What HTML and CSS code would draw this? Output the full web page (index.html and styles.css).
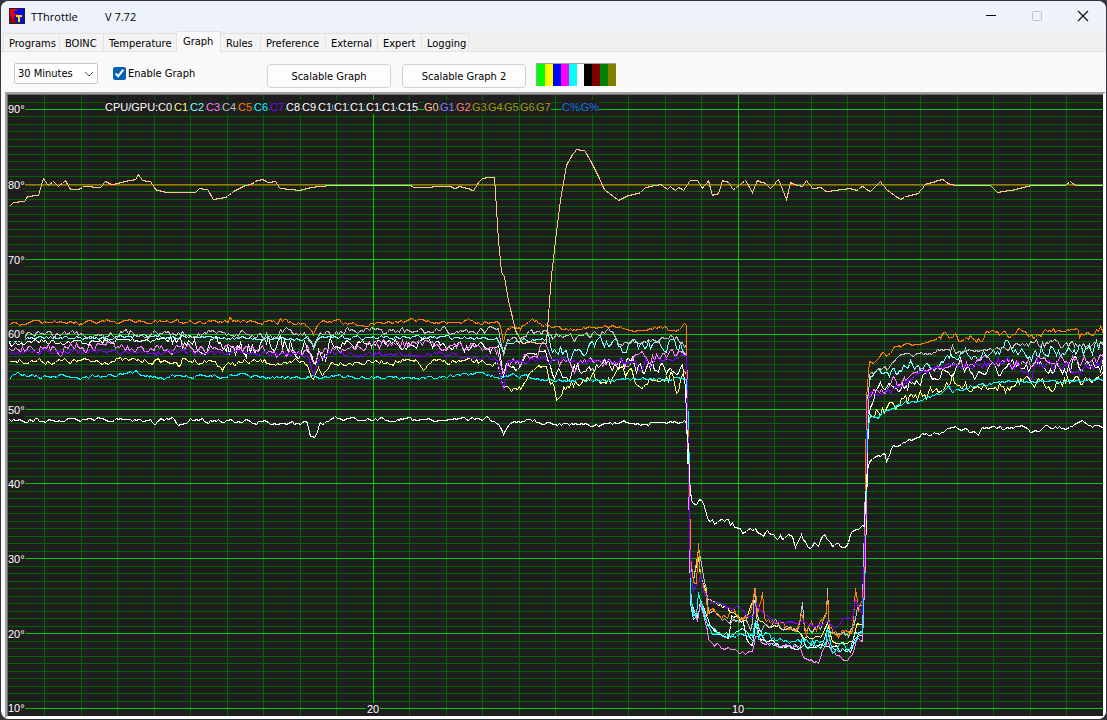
FILE: index.html
```html
<!DOCTYPE html>
<html lang="en">
<head>
    <meta charset="UTF-8">
    <meta name="viewport" content="width=device-width, initial-scale=1.0">
    <title>TThrottle</title>
    <link rel="stylesheet" href="styles.css">
</head>
<body>
    <div class="window">
        <header class="titlebar">
            <svg class="app-icon" viewBox="0 0 16 16" shape-rendering="crispEdges" aria-hidden="true">
                <rect width="16" height="16" fill="#202038"/>
                <rect x="1" y="1" width="14" height="14" fill="#0808f0"/>
                <path d="M1 1h7v2H5v3h4v2H5v7H1z" fill="#e80010"/>
                <path d="M1 8h2v7H1zM3 11h4v4H3z" fill="#900010"/>
                <path d="M6 7h8v3h-1V9h-2v6H9V9H8v1H6z" fill="#303000"/>
                <path d="M7 7h6v2h-2v5H9V9H7z" fill="#f0e010"/>
            </svg>
            <h1>TThrottle</h1>
            <span class="version">V 7.72</span>
            <div class="window-buttons">
                <button type="button" aria-label="Minimize"><svg viewBox="0 0 12 12"><path d="M1 5.5h10" stroke="#000"/></svg></button>
                <button type="button" aria-label="Maximize" disabled><svg viewBox="0 0 12 12"><rect x="1.5" y="1.5" width="9" height="9" rx="1" stroke="#bfc3c8"/></svg></button>
                <button type="button" aria-label="Close"><svg viewBox="0 0 12 12"><path d="M1 1l10 10M11 1L1 11" stroke="#111" stroke-width="1.2"/></svg></button>
            </div>
        </header>

        <div class="tabs" role="tablist">
            <button type="button" role="tab">Programs</button>
            <button type="button" role="tab">BOINC</button>
            <button type="button" role="tab">Temperature</button>
            <button type="button" role="tab" class="active" aria-selected="true">Graph</button>
            <button type="button" role="tab">Rules</button>
            <button type="button" role="tab">Preference</button>
            <button type="button" role="tab">External</button>
            <button type="button" role="tab">Expert</button>
            <button type="button" role="tab">Logging</button>
        </div>

        <main class="panel">
            <div class="toolbar">
                <div class="range">
                    <select id="range" aria-label="Time range">
                        <option>30 Minutes</option>
                        <option>60 Minutes</option>
                    </select>
                    <svg class="chevron" viewBox="0 0 10 6"><path d="M1 1l4 4 4-4"/></svg>
                </div>
                <div class="enable">
                    <input type="checkbox" id="enableGraph" checked>
                    <label for="enableGraph">Enable Graph</label>
                </div>
                <div class="actions">
                    <button type="button">Scalable Graph</button>
                    <button type="button">Scalable Graph 2</button>
                </div>
                <div class="swatches">
                    <i class="lime"></i><i class="yellow"></i><i class="blue"></i><i class="magenta"></i><i class="cyan"></i><i class="white"></i><i class="black"></i><i class="maroon"></i><i class="green"></i><i class="olive"></i>
                </div>
            </div>

            <div class="frame">
                <div class="plot" id="plot">
                    <svg id="chart" class="chart" viewBox="8 95 1095 621" preserveAspectRatio="none" role="img" aria-label="CPU and GPU temperatures"></svg>
                    <div class="legend">
                        <span class="legend-title">CPU/GPU:</span>
                        <div class="keys">
                            <span class="c0">C0</span><span class="c1">C1</span><span class="c2">C2</span><span class="c3">C3</span><span class="c4">C4</span><span class="c5">C5</span><span class="c6">C6</span><span class="c7">C7</span><span class="c0">C8</span><span class="c0">C9</span><span class="c0">C10</span><span class="c0">C11</span><span class="c0">C12</span><span class="c0">C13</span><span class="c0">C14</span><span class="c0 wide">C15</span>
                        </div>
                        <div class="keys gpu">
                            <span class="g0">G0</span><span class="g1">G1</span><span class="g2">G2</span><span class="g3">G3</span><span class="g3">G4</span><span class="g3">G5</span><span class="g3">G6</span><span class="g3">G7</span>
                        </div>
                        <div class="load">
                            <span>C%</span><span>G%</span>
                        </div>
                    </div>
                </div>
            </div>
        </main>
    </div>
    <script src="graph.js"></script>
</body>
</html>
```

FILE: styles.css
```css
* { box-sizing: border-box; }
body {
    margin: 0;
    background: #35353d;
    color: #000;
    font-family: "DejaVu Sans Condensed", "DejaVu Sans", sans-serif;
    font-size: 11px;
}
button, select, input { font: inherit; color: inherit; margin: 0; }
.window {
    display: flex;
    flex-direction: column;
    height: calc(100vh - 2px);
    margin: 1px;
    border-radius: 8px;
    overflow: hidden;
    background: #f9f9f9;
}

/* title bar */
.titlebar {
    display: flex;
    align-items: center;
    height: 30px;
    padding-left: 8px;
    background: linear-gradient(90deg, #eef3fb, #edf3f8);
    font-family: "Open Sans", sans-serif;
}
.titlebar h1 {
    width: 74px;
    margin: 0 0 0 6px;
    font-size: 11px;
    font-weight: normal;
}
.app-icon { width: 16px; height: 16px; }
.window-buttons { display: flex; margin-left: auto; }
.window-buttons button {
    display: flex;
    align-items: center;
    justify-content: center;
    width: 46px;
    height: 28px;
    padding: 0;
    border: 0;
    background: none;
}
.window-buttons svg { width: 12px; height: 12px; fill: none; }

/* tabs */
.tabs {
    display: grid;
    grid-template-columns: 57px 44px 73px 44px 40px 65px 52px 44px 47px;
    align-items: end;
    height: 21px;
    padding-left: 2px;
    background: #f0f0f0;
    box-shadow: inset 0 -1px #e2e2e2;
}
.tabs button {
    height: 19px;
    padding: 1px 0 0 5px;
    border: 1px solid #e2e2e2;
    border-left-width: 0;
    background: #f3f3f3;
    text-align: left;
    white-space: nowrap;
}
.tabs button:first-child { border-left-width: 1px; }
.tabs .active {
    height: 21px;
    padding: 0 0 1px 6px;
    border-bottom: 0;
    background: #f9f9f9;
}

/* controls */
.panel { flex: 1; display: flex; flex-direction: column; min-height: 0; }
.toolbar {
    display: flex;
    align-items: flex-start;
    height: 40px;
    padding: 11px 13px 0;
}
.range { position: relative; width: 84px; }
.range select {
    appearance: none;
    width: 100%;
    height: 21px;
    padding: 0 3px;
    border: 1px solid #c8c8c8;
    border-radius: 2px;
    background: #fff;
}
.chevron {
    position: absolute;
    right: 4px;
    top: 8px;
    width: 10px;
    height: 6px;
    fill: none;
    stroke: #555;
    pointer-events: none;
}
.enable {
    display: flex;
    align-items: center;
    gap: 2px;
    width: 154px;
    height: 20px;
    margin-left: 15px;
}
.enable input { width: 13px; height: 13px; accent-color: #0560b8; }
.actions { display: flex; gap: 11px; padding-top: 1px; }
.actions button {
    width: 124px;
    height: 24px;
    padding: 0;
    border: 1px solid #d0d0d0;
    border-radius: 4px;
    background: #fdfdfd;
}
.swatches {
    display: flex;
    width: 80px;
    height: 23px;
    margin-left: 10px;
    border: solid #a0a0a0;
    border-width: 1px 0 0 1px;
}
.swatches i { flex: 1; }
.lime { background: #0f0; }
.yellow { background: #ff0; }
.blue { background: #00f; }
.magenta { background: #f0f; }
.cyan { background: #0ff; }
.white { background: #fff; }
.black { background: #000; }
.maroon { background: #800000; }
.green { background: #008000; }
.olive { background: #808000; }

/* graph */
.frame {
    flex: 1;
    display: flex;
    min-height: 0;
    margin-left: 4px;
    border: solid #a0a0a0;
    border-width: 2px 3px 3px 2px;
    border-right-color: #fff;
    border-bottom-color: #fff;
}
.plot {
    position: relative;
    flex: 1;
    border: solid #696969;
    border-width: 1px 0 0 1px;
    background: #1e1e1e;
    color: #fff;
    font: 11px/13px "Liberation Sans", Arial, sans-serif;
}
.chart {
    display: block;
    position: absolute;
    width: 100%;
    height: 100%;
    fill: none;
    shape-rendering: crispEdges;
}
.chart path { vector-effect: non-scaling-stroke; }
.minor { stroke: #006400; }
.major { stroke: #00c800; }
.limit { stroke: #e02000; }
.y-label, .x-label { position: absolute; background: #1e1e1e; }
.y-label { left: 0; width: 17px; margin-top: -6px; }
.x-label { bottom: 0; padding: 0 1px; transform: translateX(-50%); }
.legend {
    position: absolute;
    left: 97px;
    top: 5px;
    display: flex;
    line-height: 14px;
}
.legend span { background: #1e1e1e; }
.legend-title { width: 53px; white-space: nowrap; }
.keys { display: flex; gap: 1px; }
.keys span { width: 15px; overflow: hidden; }
.keys .wide { width: 20px; }
.gpu { margin-left: 6px; }
.load { display: flex; gap: 1px; margin-left: 11px; color: #0a78e8; }
.c0 { color: #fff; }
.c1 { color: #ffff80; }
.c2 { color: #80ffff; }
.c3 { color: #ff80ff; }
.c4 { color: #c0c0c0; }
.c5 { color: #ff8000; }
.c6 { color: #00ffff; }
.c7 { color: #8000ff; }
.g0 { color: #ffc890; }
.g1 { color: #8080ff; }
.g2 { color: #ff8080; }
.g3 { color: #a0a000; }
path.series { stroke: currentColor; }
```

FILE: graph.js
```javascript
// Each series: class, base jitter, then "x,y" points. A third value changes the jitter from there on.
const series = [
    ["c0", 3, "9,345 22,343 27,340 60,341 90,342 140,339 170,339,8 176,345 200,344 227,348,10 240,350 260,345 300,345 307,343 313,365 318,350 325,357 330,342,5 365,343 400,343 440,345 490,348 498,350 503,381 507,360 515,366 525,355 535,352 545,345 550,365,8 560,375 575,368 590,365 620,363 650,370 670,365 682,372 685,388,3 688,480 690,600 697,618 700,600 712,628 720,633 728,635 731,615 742,620 746,640 752,642 755,625 760,640 775,645 800,646 850,650 856,635 862,635,1 865,560 868,415,5 875,390 880,385 886,385 890,378,8 900,383 907,386 912,378 930,378 942,368 950,375 960,362,9 970,372 1000,370 1030,370 1050,366 1080,363 1103,363"],
    ["c1", 3, "9,360 60,361 120,360 172,361 178,367 182,360 215,361 222,369 230,363 260,361 275,362 287,366 295,361 307,364 313,379 318,368 322,375 330,362 365,362 400,361 415,362 425,369 430,362 470,361 497,364 503,390 520,388 527,375 540,366 546,364 550,382,7 556,396 560,392 563,385 575,388 585,383 600,377 625,375 650,382 670,376 678,392 682,380 686,378,2 690,560 693,580 698,555 700,575 708,600 725,607 740,618 746,618 748,610 754,600 758,620 770,627 790,628 800,632 803,638 820,636 827,625 832,640 845,642 852,640 857,622 862,625,1 865,560 867,430 870,412,6 885,411 895,405 903,400 920,395 940,388 952,377 955,388 975,385 995,383 1007,389 1020,383 1050,384 1065,378 1080,382 1085,376 1103,377"],
    ["c2", 2, "9,341 25,338 40,337 100,338 145,334 170,337 200,337 280,338 307,338 313,345 318,338 345,337 400,337 496,337 503,353 507,342 520,340 547,338,8 550,352 560,350 570,360 580,355 590,346 620,346 650,346 686,346,3 690,600 693,617 697,612 700,605 707,625 715,632 722,635 745,630 750,640 753,640 755,620 760,632 765,643 780,645 800,645 802,635 806,645 820,645 827,630 832,650 850,652 855,630 862,632,1 865,560 867,400 870,375,4 875,371 890,373,6 895,369 910,363 920,366 935,365 950,357 965,352 975,354 995,353 1005,346,8 1025,348 1035,356 1042,346 1060,350 1075,348 1090,350 1103,346"],
    ["c3", 5, "9,351 20,348 30,346 60,350 70,343 90,348 105,342 125,349 140,350 155,345 170,350 200,347 230,350 260,347 276,355 290,350 307,348 313,362 318,352 330,350 345,346 365,345 400,343 440,345 480,347 497,351 503,370 507,360 520,362 527,353 537,353 542,345 548,348 553,365,6 570,366 590,364 630,360 660,356 686,356,2 690,600 693,612 697,620 700,603 707,630 708,640 715,644 722,648 735,649 740,651 745,653 752,650 755,635 765,643 780,645 800,648 803,658 812,659 818,661 822,650 827,640 832,652 840,658 847,662 852,655 856,640 862,640,1 865,560 867,400 873,391,4 886,392 893,375 898,385 905,380 912,378 920,370 935,368 960,364,6 990,362 1020,362 1060,362 1090,360 1103,358"],
    ["c4", 4, "9,335 30,332 50,334 70,332 90,334 120,333 200,333 240,332 276,336 280,329 300,331 307,335 313,347 318,334 345,331 400,331 440,331 498,330 503,352 507,342 520,340 527,333 545,333 552,340 560,334 572,337 590,336 612,331 618,341 650,341 676,337 684,344 686,344 690,560 693,575 698,550 706,590 708,612 712,607 720,620 735,620 745,618 750,627 752,620 754,589 757,625 761,628 765,620 790,628 799,628 802,601 804,630 820,630 826,615 827,590 829,630 848,634 853,625 858,605 862,605,1 865,480 869,374,2 885,367 886,370 895,358 905,355 925,353 950,349 952,344 955,352 970,350 1010,348,4 1022,343 1028,345 1034,338 1040,346 1050,341 1060,346 1075,344 1090,345 1103,344"],
    ["c6", 2, "9,378 18,373 40,377 60,376 110,376 137,372 150,376 200,376 240,375 280,378 307,376 365,377 440,377 480,374 497,377 515,375 540,379 600,380 686,378 688,420 689,480 690,590,3 693,615 696,617 698,595 707,625 712,632 722,635 745,635 752,635 755,620 758,635 765,635 775,640 800,643 815,642 825,645 827,625 832,650 840,645 850,650 856,635 862,630,1 865,520 867,430 870,416,2 878,416 895,405 920,399 940,393 948,387 952,393 970,387 985,384 1000,381,1 1060,381 1103,379"],
    ["c5", 2, "9,324 25,324 40,321 50,320 60,322 75,321 80,324 90,320 100,321 120,321 127,319 135,322 155,320 165,321 200,322 228,320 229,316 232,320 260,322 273,321 277,326 280,320 300,323 307,325 313,335 317,323 335,319 345,323 362,325 370,323 395,322 412,319 440,322 455,324 468,319 480,322 496,320 500,325 503,339 507,327 520,327 532,320 545,326 560,328 575,330 590,326 625,328 640,331 660,326 675,331 684,325 686,326 687,410 689,480 690,555 693,582 696,582 698,543 700,575 706,592,4 707,610 715,612 725,618 735,610 742,620 750,612 755,590 757,618 760,605 762,592 764,618 775,622 785,626 797,627 802,615 806,633 811,620 816,632 826,610 827,595 829,628 838,634 845,630 852,628 855,585 858,608 862,600,1 864,560 865,480 866,400 867,385 869,361,2 873,362 883,353 886,358 893,349 900,346 912,344 925,343 935,340 940,338 943,333 950,338 955,333 958,340 968,336,4 980,340 985,333 995,331 1005,335 1013,331 1025,332 1035,336 1045,330 1055,329 1070,330 1078,326 1079,333 1090,330 1100,328 1103,331"],
    ["c7", 3, "9,352 60,351 120,352 170,352 220,353 277,355 300,354 307,354 313,374 318,357 330,354 365,355 395,352 420,355 440,353 480,357 497,358 503,391 507,362 540,358 560,360 590,361 635,360,5 640,370 645,362 686,357,2 687,400 688,470 690,575 693,590 697,585 700,575 703,590 710,600 722,605 730,608 738,604 747,617 753,615 756,605 762,612 775,622 800,622 820,625 826,620 835,628 843,618 852,620 855,600 862,615,1 865,520 867,400 870,391,3 890,392 900,384 912,378 920,369 945,366 970,365,6 1000,362 1025,365 1031,378 1037,365 1060,367 1079,370 1095,366 1103,364"],
    ["c0", 2, "9,419 60,420 100,419 150,420 155,425 160,418 172,418 176,424 190,420 240,421 290,424 307,421 310,436 315,437 320,422 324,424 335,418 365,419 400,419 440,419 488,418 498,424 503,434 508,424 530,420 545,424 590,424 625,423 640,424 684,421 686,424 688,450 689,480 691,500 696,503 699,498 703,502 708,520,4 715,522 722,517 730,525 738,524 742,533 750,532 755,528 765,532 780,537 790,535 795,543 801,535 808,545 820,542 825,538 830,543 840,548 848,541 854,527 858,531 864,528,1 866,480 867,470 870,460,2 885,454 886,462 891,447 905,443 920,435 935,433 955,427 978,433 982,426 1005,428 1028,427 1031,434 1045,426 1070,427 1082,421 1090,426 1103,426"],
    ["g0", 0, "9,206 13,202 24,201 27,196 38,195 43,178 48,185 53,181 58,186 65,180 70,189 78,189 83,186 100,187 105,181 112,184 120,182 130,180 135,179 138,174 142,180 150,181 155,189 165,192 195,192 199,188 207,189 213,199 225,197 235,190 245,185 250,184 255,181 262,179 267,182 275,181 280,188 300,190 310,187 330,185 410,185 413,187 450,186 455,188 460,186 473,190 478,182 482,178 489,177 494,177 496,208 498,240 501,272 504,276 508,300 515,330 522,343 530,341 538,343 546,343 548,315 551,275 555,240 560,200 566,165 572,154 576,149 584,150 590,160 597,174 604,189 612,195 618,200 628,195 640,192 645,187 660,184 667,189 670,186 675,190 678,187 683,190 690,180 697,180 702,188 708,180 712,195 718,193 722,180 728,182 733,189 740,184 745,180 752,192 757,180 765,183 770,188 778,179 786,199 790,182 795,184 802,186 806,180 812,188 820,187 826,191 835,190 850,188 856,190 862,186 870,191 880,181 887,190 900,199 905,196 918,193 925,184 942,179 950,184 958,185 990,185 997,192 1010,190 1030,185 1065,185 1070,181 1075,185 1103,185"]
];

const plot = document.getElementById("plot");
const chart = document.getElementById("chart");
const TOP = 95, LEFT = 8, WIDTH = 1095, HEIGHT = 621;

let seed = 7;
function random() {
    seed = (seed * 16807) % 2147483647;
    return seed / 2147483647;
}

function addPath(cls, d) {
    const path = document.createElementNS("http://www.w3.org/2000/svg", "path");
    path.setAttribute("class", cls);
    path.setAttribute("d", d);
    chart.appendChild(path);
}

function addLabel(cls, text, side, percent) {
    const label = document.createElement("span");
    label.className = cls;
    label.textContent = text;
    label.style[side] = percent + "%";
    plot.appendChild(label);
}

function degreeY(t) {
    return Math.round(109 + (90 - t) * 7.4875) + 0.5;
}

function drawGrid() {
    let minor = "", major = "";
    for (let t = 91; t >= 10; t--) {
        const line = `M8 ${degreeY(t)}H1103`;
        if (t % 10) minor += line; else major += line;
    }
    for (let m = 1; m < 30; m++) {
        const line = `M${Math.floor(LEFT + m * 36.5) + 0.5} 95V716`;
        if (m % 10) minor += line; else major += line;
    }
    addPath("minor", minor);
    addPath("major", major);
    addPath("limit", "M25 185.5H1103");

    for (let t = 90; t >= 10; t -= 10) {
        addLabel("y-label", t + "°", "top", (degreeY(t) - TOP) / HEIGHT * 100);
    }
    addLabel("x-label", "20", "left", 365 / WIDTH * 100);
    addLabel("x-label", "10", "left", 730 / WIDTH * 100);
}

function drawSeries([cls, jitter, data]) {
    const points = data.split(" ").map(p => p.split(",").map(Number));
    let d = "", drift = 0;
    points.forEach(([x, y, change], i) => {
        if (change !== undefined) jitter = change;
        const next = points[i + 1] || [x + 1, y];
        for (let px = x; px < next[0]; px += 2) {
            const base = y + (next[1] - y) * (px - x) / (next[0] - x);
            drift = drift * 0.45 + (random() - 0.5) * jitter * 1.7;
            d += `${d ? "L" : "M"}${px + 0.5} ${Math.round(base + drift) + 0.5}`;
        }
    });
    addPath("series " + cls, d);
}

drawGrid();
series.forEach(drawSeries);
```
